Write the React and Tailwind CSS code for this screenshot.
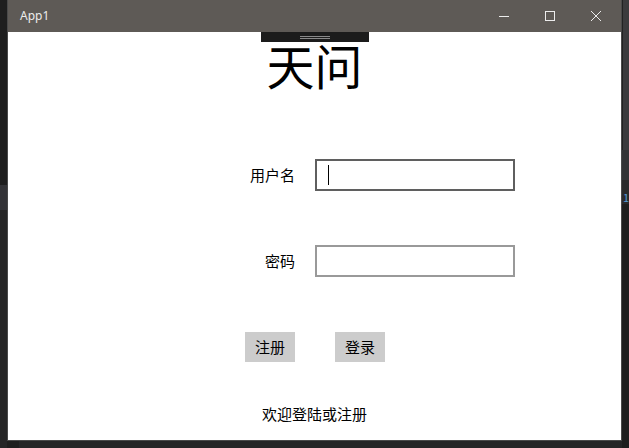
const font = { fontFamily: '"Noto Sans CJK SC", "Noto Sans", sans-serif' };

function TitleBar() {
  return (
    <div className="h-[32px] bg-[#5e5a56] flex items-center text-[#ececec]">
      <span className="ml-[12px] text-[12px]" style={{ fontFamily: '"Noto Sans", sans-serif' }}>App1</span>
      <div className="ml-auto flex items-center">
        <div className="w-[46px] h-[32px] flex items-center justify-center">
          <svg width="10" height="10" viewBox="0 0 10 10">
            <path d="M0 5.5h10" stroke="currentColor" strokeWidth="1" />
          </svg>
        </div>
        <div className="w-[46px] h-[32px] flex items-center justify-center">
          <svg width="10" height="10" viewBox="0 0 10 10">
            <rect x="0.5" y="0.5" width="9" height="9" fill="none" stroke="currentColor" strokeWidth="1" />
          </svg>
        </div>
        <div className="w-[46px] h-[32px] flex items-center justify-center mr-[2px]">
          <svg width="10" height="10" viewBox="0 0 10 10">
            <path d="M0 0L10 10M10 0L0 10" stroke="currentColor" strokeWidth="1" />
          </svg>
        </div>
      </div>
    </div>
  );
}

function Field({ label, focused }) {
  return (
    <div className="flex items-center ml-[227px]">
      <div className="w-[60px] text-right text-[15px] text-black">{label}</div>
      <div
        className={
          "ml-[20px] w-[200px] h-[32px] border-2 bg-white flex items-center " +
          (focused ? "border-[#5f5f5f]" : "border-[#999999]")
        }
      >
        {focused && <span className="ml-[11px] w-px h-[20px] bg-black" />}
      </div>
    </div>
  );
}

export default function App() {
  return (
    <div className="w-[629px] h-[448px] bg-[#1e1e1e] flex overflow-hidden" style={font}>
      {/* left edge of the editor behind */}
      <div className="w-[7px] flex flex-col">
        <div className="h-[185px]" />
        <div className="h-[25px] bg-[#333337]" />
        <div className="flex-1 bg-[#252526]" />
      </div>

      <div className="w-[615px] flex flex-col">
        <div className="h-[441px] flex flex-col border border-[#4a4a4a] border-t-0">
          <TitleBar />
          <div className="flex-1 bg-white flex flex-col">
            <div className="mx-auto w-[108px] h-[10px] bg-[#1c1c1c] flex flex-col items-center justify-center gap-[1px]">
              <div className="w-[30px] h-px bg-[#8a8a8a]" />
              <div className="w-[30px] h-px bg-[#8a8a8a]" />
            </div>
            <div className="-mt-[6px] text-center text-[48px] leading-[56px] text-black">天问</div>

            <div className="mt-[67px]">
              <Field label="用户名" focused />
            </div>
            <div className="mt-[54px]">
              <Field label="密码" />
            </div>

            <div className="mt-[55px] ml-[237px] flex gap-[40px]">
              <div className="w-[50px] h-[30px] bg-[#cccccc] flex items-center justify-center text-[15px] text-black">注册</div>
              <div className="w-[50px] h-[30px] bg-[#cccccc] flex items-center justify-center text-[15px] text-black">登录</div>
            </div>

            <div className="mt-[41px] text-center text-[15px] text-black">欢迎登陆或注册</div>
          </div>
        </div>
        <div className="flex-1 flex">
          <div className="w-[12px]" />
          <div className="flex-1 bg-[#252526]" />
        </div>
      </div>

      {/* right edge of the editor behind */}
      <div className="w-[7px] flex flex-col bg-[#2a2a2b]">
        <div className="h-[150px] bg-[#3b3b3d] border-l border-[#222]" />
        <div className="h-[30px] bg-[#333335]" />
        <div className="h-[10px]" />
        <div className="text-[11px] leading-[14px] text-[#569cd6] ml-[1px]">1</div>
        <div className="flex-1 bg-[#1e1e1e]" />
      </div>
    </div>
  );
}
